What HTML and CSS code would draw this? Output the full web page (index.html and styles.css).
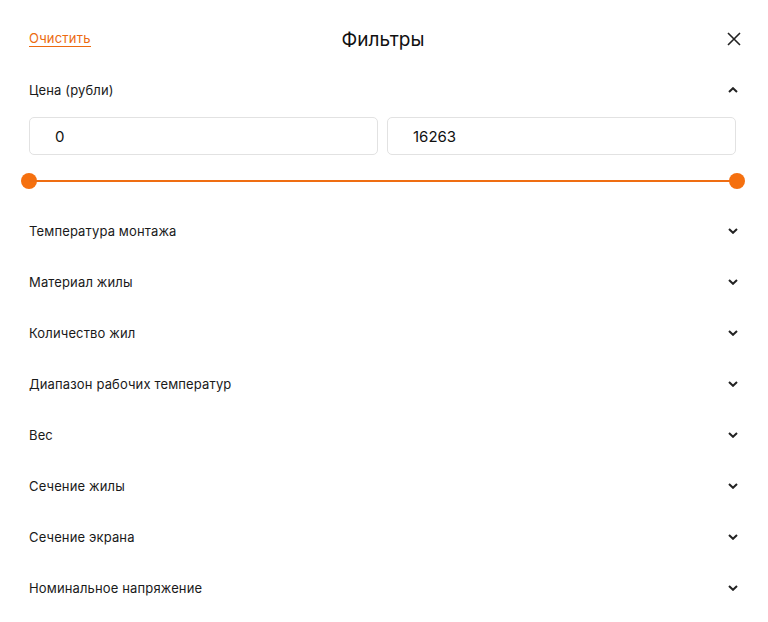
FILE: index.html
```html
<!DOCTYPE html>
<html lang="ru">
<head>
<meta charset="utf-8">
<link rel="stylesheet" href="styles.css">
</head>
<body>
<div class="panel">
  <header class="head">
    <a class="clear" href="#">Очистить</a>
    <h1 class="title">Фильтры</h1>
    <button class="close" aria-label="Закрыть">
      <svg width="14" height="14" viewBox="0 0 14 14"><path d="M1 1L13 13M13 1L1 13" stroke="#222" stroke-width="1.6" fill="none"/></svg>
    </button>
  </header>

  <section class="price">
    <div class="row">
      <span class="label">Цена (рубли)</span>
      <svg class="chev" width="10" height="6" viewBox="0 0 10 6"><path d="M1 5L5 1.2L9 5" stroke="#222" stroke-width="2" fill="none"/></svg>
    </div>
    <div class="inputs">
      <div class="field">0</div>
      <div class="field">16263</div>
    </div>
    <div class="slider">
      <span class="thumb"></span>
      <span class="track"></span>
      <span class="thumb"></span>
    </div>
  </section>

  <ul class="list">
    <li class="row"><span class="label">Температура монтажа</span><svg class="chev" width="10" height="6" viewBox="0 0 10 6"><path d="M1 1L5 4.8L9 1" stroke="#222" stroke-width="2" fill="none"/></svg></li>
    <li class="row"><span class="label">Материал жилы</span><svg class="chev" width="10" height="6" viewBox="0 0 10 6"><path d="M1 1L5 4.8L9 1" stroke="#222" stroke-width="2" fill="none"/></svg></li>
    <li class="row"><span class="label">Количество жил</span><svg class="chev" width="10" height="6" viewBox="0 0 10 6"><path d="M1 1L5 4.8L9 1" stroke="#222" stroke-width="2" fill="none"/></svg></li>
    <li class="row"><span class="label">Диапазон рабочих температур</span><svg class="chev" width="10" height="6" viewBox="0 0 10 6"><path d="M1 1L5 4.8L9 1" stroke="#222" stroke-width="2" fill="none"/></svg></li>
    <li class="row"><span class="label">Вес</span><svg class="chev" width="10" height="6" viewBox="0 0 10 6"><path d="M1 1L5 4.8L9 1" stroke="#222" stroke-width="2" fill="none"/></svg></li>
    <li class="row"><span class="label">Сечение жилы</span><svg class="chev" width="10" height="6" viewBox="0 0 10 6"><path d="M1 1L5 4.8L9 1" stroke="#222" stroke-width="2" fill="none"/></svg></li>
    <li class="row"><span class="label">Сечение экрана</span><svg class="chev" width="10" height="6" viewBox="0 0 10 6"><path d="M1 1L5 4.8L9 1" stroke="#222" stroke-width="2" fill="none"/></svg></li>
    <li class="row"><span class="label">Номинальное напряжение</span><svg class="chev" width="10" height="6" viewBox="0 0 10 6"><path d="M1 1L5 4.8L9 1" stroke="#222" stroke-width="2" fill="none"/></svg></li>
  </ul>
</div>
</body>
</html>
```
FILE: styles.css
```css
* { box-sizing: border-box; }
html, body { margin: 0; padding: 0; background: #fff; }
body {
  font-family: Inter, "Noto Sans", "Liberation Sans", sans-serif;
  color: #1a1a1a;
}
.panel {
  width: 708px;
  margin-left: 29px;
  padding-top: 20px;
}
.head {
  height: 38px;
  display: flex;
  align-items: center;
  justify-content: space-between;
  position: relative;
}
.clear {
  font-size: 13px;
  letter-spacing: 0.2px;
  color: #ec6a10;
  text-decoration: none;
  border-bottom: 1px solid #ec6a10;
  line-height: 15px;
}
.title {
  position: absolute;
  left: 0; right: 0;
  margin: 0;
  text-align: center;
  font-size: 19px;
  font-weight: 400;
  pointer-events: none;
  color: #111;
}
.close {
  background: none;
  border: 0;
  padding: 0;
  width: 14px;
  height: 14px;
  display: flex;
  margin-right: -4px;
}
.row {
  display: flex;
  align-items: center;
  justify-content: space-between;
  height: 51px;
}
.price .row { height: 26px; margin-top: 19px; }
.label { font-size: 13px; letter-spacing: 0.14px; color: #1a1a1a; }
.chev { margin-right: -1px; display: block; }
.inputs {
  display: grid;
  grid-template-columns: 1fr 1fr;
  gap: 9px;
  margin-top: 14px;
  margin-right: 1px;
}
.field {
  height: 38px;
  border: 1px solid #e2e2e2;
  border-radius: 5px;
  display: flex;
  align-items: center;
  padding-left: 25px;
  font-size: 15px;
  color: #111;
}
.slider {
  display: flex;
  align-items: center;
  margin: 18px -8px 0;
  height: 16px;
}
.thumb {
  width: 16px;
  height: 16px;
  border-radius: 50%;
  background: #f5700f;
  flex: none;
}
.track {
  flex: 1;
  height: 2px;
  background: #ef6d12;
  margin: 0 -8px;
}
.list {
  list-style: none;
  margin: 16px 0 0;
  padding: 0;
}
```
